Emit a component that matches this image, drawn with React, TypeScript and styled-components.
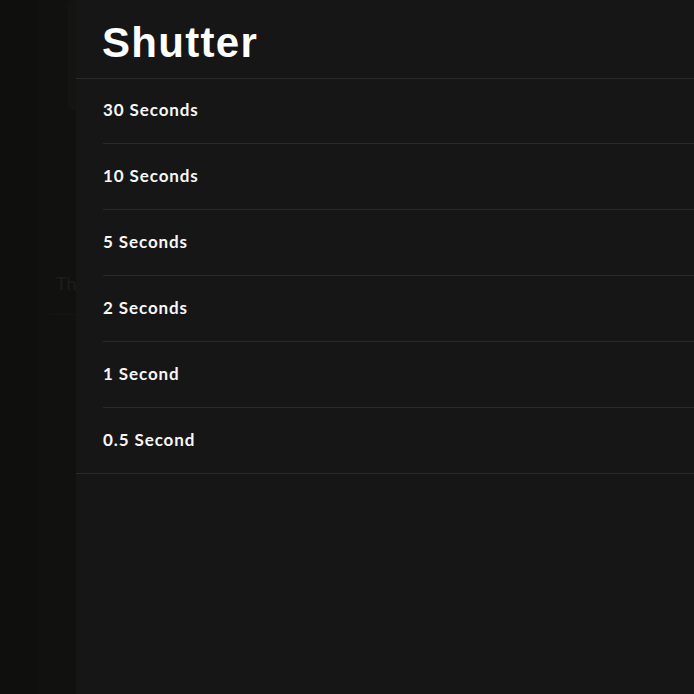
import React from "react";
import styled, { createGlobalStyle } from "styled-components";

const Global = createGlobalStyle`
  html, body { margin: 0; padding: 0; background: #0f100e; }
  body { width: 694px; height: 694px; overflow: hidden; }
  #root { height: 694px; }
`;

const Page = styled.div`
  display: flex;
  width: 694px;
  height: 694px;
  background: #0f100e;
`;

const Backdrop = styled.div`
  width: 76px;
  flex: none;
  display: flex;
  justify-content: flex-end;
  overflow: hidden;
`;

const DimColumn = styled.div`
  width: 38px;
  height: 100%;
  background: #111210;
  display: flex;
  flex-direction: column;
  overflow: hidden;
`;

const DimCard = styled.div`
  margin-left: 30px;
  height: 110px;
  flex: none;
  background: #141512;
  border-radius: 4px 0 0 4px;
`;

const DimText = styled.div`
  margin-top: 162px;
  margin-left: 12px;
  padding-left: 6px;
  padding-bottom: 20px;
  font-family: "Lato", "Open Sans", sans-serif;
  font-size: 18px;
  color: #1d1e1b;
  white-space: nowrap;
  border-bottom: 1px solid #151613;
`;

const Panel = styled.div`
  flex: 1;
  background: #161616;
  display: flex;
  flex-direction: column;
`;

const Header = styled.div`
  height: 79px;
  box-sizing: border-box;
  padding-left: 26px;
  padding-top: 19px;
  border-bottom: 1px solid #2a2a2a;
`;

const Title = styled.h1`
  margin: 0;
  font-family: "Liberation Sans", Arial, sans-serif;
  font-weight: 700;
  font-size: 42px;
  letter-spacing: 1.3px;
  line-height: 48px;
  color: #ffffff;
`;

const List = styled.div`
  display: flex;
  flex-direction: column;
  border-bottom: 1px solid #2a2a2a;
`;

const Row = styled.div`
  margin-left: 27px;
  height: 66px;
  box-sizing: border-box;
  padding-bottom: 3px;
  display: flex;
  align-items: center;
  border-bottom: 1px solid #2a2a2a;
  font-family: "Lato", "Open Sans", sans-serif;
  font-weight: 700;
  font-size: 17px;
  letter-spacing: 0.9px;
  color: #f6f6f6;
  &:first-child { height: 65px; }
  &:last-child { border-bottom: none; height: 65px; }
`;

const options = ["30 Seconds", "10 Seconds", "5 Seconds", "2 Seconds", "1 Second", "0.5 Second"];

export default function App() {
  return (
    <>
      <Global />
      <Page>
        <Backdrop>
          <DimColumn>
            <DimCard />
            <DimText>Th</DimText>
          </DimColumn>
        </Backdrop>
        <Panel>
          <Header>
            <Title>Shutter</Title>
          </Header>
          <List>
            {options.map((o) => (
              <Row key={o}>{o}</Row>
            ))}
          </List>
        </Panel>
      </Page>
    </>
  );
}
